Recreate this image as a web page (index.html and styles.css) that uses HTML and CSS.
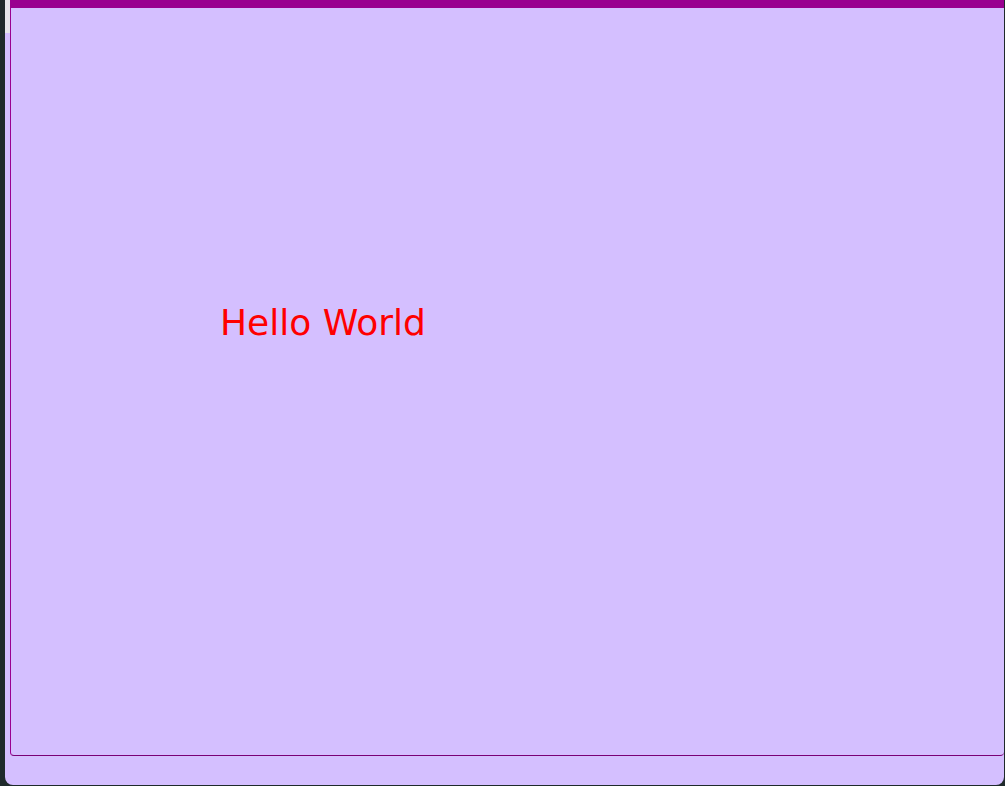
FILE: index.html
```html
<!DOCTYPE html>
<html>
<head>
<meta charset="utf-8">
<link rel="stylesheet" href="styles.css">
</head>
<body>
<div class="frame">
  <div class="panel">
    <p class="hello">Hello World</p>
  </div>
</div>
</body>
</html>
```
FILE: styles.css
```css
html, body {
  margin: 0;
  padding: 0;
  height: 100%;
}
body {
  background: #1f2a2b;
  overflow: hidden;
}
.frame {
  margin-left: 5px;
  width: 999px;
  height: 785px;
  box-sizing: border-box;
  background: linear-gradient(to bottom, #e6e6ea 0, #e6e6ea 33px, #d4bfff 33px);
  border-radius: 0 0 8px 8px;
}
.panel {
  margin-left: 5px;
  width: 994px;
  height: 756px;
  box-sizing: border-box;
  background: #d4bfff;
  border-top: 8px solid #990090;
  border-left: 1px solid #990090;
  border-bottom: 1px solid #7a0075;
  border-radius: 0 0 4px 4px;
  padding: 294px 0 0 209px;
}
.hello {
  margin: 0;
  font-family: "Comic Sans MS", "DejaVu Sans", sans-serif;
  font-size: 36px;
  color: #ff0000;
}
```
